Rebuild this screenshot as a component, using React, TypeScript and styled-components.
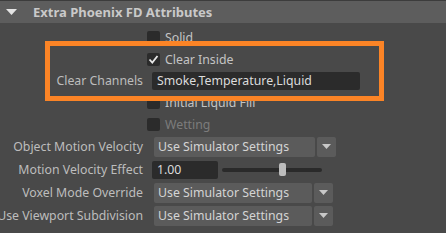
import React from "react";
import styled, { createGlobalStyle } from "styled-components";

const Global = createGlobalStyle`
  html, body { margin: 0; padding: 0; background: #494949; overflow: hidden; }
  body { font-family: "Noto Sans", "Open Sans", sans-serif; }
`;

const Page = styled.div`
  position: relative;
  width: 446px;
  height: 233px;
  background: #494949;
  overflow: hidden;
`;

const Header = styled.div`
  height: 22px;
  border-top: 1px solid #3c3c3c;
  background: #5d5d5d;
  display: flex;
  align-items: center;
  padding-left: 6px;
  gap: 16px;
`;

const HeaderTitle = styled.span`
  font-weight: bold;
  font-size: 13px;
  color: #c9c9c9;
`;

const Rows = styled.div`
  display: flex;
  flex-direction: column;
  padding-top: 4px;
`;

const Row = styled.div<{ $h: number }>`
  height: ${(p) => p.$h}px;
  display: flex;
  align-items: center;
`;

const Label = styled.div`
  width: 143px;
  flex: none;
  display: flex;
  justify-content: flex-end;
  white-space: nowrap;
  font-size: 12.3px;
  color: #bdbdbd;
`;

const Control = styled.div<{ $ml: number }>`
  margin-left: ${(p) => p.$ml}px;
  display: flex;
  align-items: center;
`;

const Box = styled.div`
  width: 13px;
  height: 13px;
  border-radius: 2px;
  background: #2b2b2b;
  display: flex;
  align-items: center;
  justify-content: center;
`;

const CheckText = styled.span<{ $dim?: boolean }>`
  margin-left: 5px;
  font-size: 12.3px;
  color: ${(p) => (p.$dim ? "#7c7c7c" : "#c4c4c4")};
`;

const Field = styled.div<{ $w: number }>`
  width: ${(p) => p.$w}px;
  height: 18px;
  background: #2b2b2b;
  border-radius: 2px;
  box-sizing: border-box;
  padding-left: 5px;
  display: flex;
  align-items: center;
  font-size: 12.3px;
  color: #dcdcdc;
  white-space: nowrap;
`;

const Drop = styled.div<{ $w: number }>`
  width: ${(p) => p.$w}px;
  height: 20px;
  background: #5b5b5b;
  border-radius: 2px;
  box-sizing: border-box;
  padding-left: 4px;
  display: flex;
  align-items: center;
  font-size: 12.3px;
  color: #d4d4d4;
  white-space: nowrap;
`;

const ArrowBtn = styled.div`
  margin-left: 2px;
  width: 19px;
  height: 20px;
  background: #5b5b5b;
  border-radius: 2px;
  display: flex;
  align-items: center;
  justify-content: center;
`;

const Track = styled.div`
  position: relative;
  margin-left: 4px;
  width: 100px;
  height: 4px;
  border-radius: 2px;
  background: #2a2a2a;
`;

const Handle = styled.div`
  position: absolute;
  left: 57px;
  top: -5px;
  width: 7px;
  height: 13px;
  border-radius: 2px;
  background: #bdbdbd;
`;

const Highlight = styled.div`
  position: absolute;
  left: 45px;
  top: 41px;
  width: 339px;
  height: 60px;
  box-sizing: border-box;
  border: 5px solid #fb8426;
  pointer-events: none;
`;

const Tri = () => (
  <svg width="11" height="6" viewBox="0 0 11 6">
    <polygon points="0,0 11,0 5.5,6" fill="#e4e4e4" />
  </svg>
);

const SmallTri = () => (
  <svg width="9" height="5" viewBox="0 0 9 5">
    <polygon points="0,0 9,0 4.5,5" fill="#c8c8c8" />
  </svg>
);

const Check = () => (
  <svg width="11" height="11" viewBox="0 0 11 11">
    <polyline points="1.5,5.5 4.3,8.5 9.5,2" fill="none" stroke="#e8e8e8" strokeWidth="1.8" />
  </svg>
);

const CheckRow = ({ h, text, checked, dim }: { h: number; text: string; checked?: boolean; dim?: boolean }) => (
  <Row $h={h}>
    <Label />
    <Control $ml={4}>
      <Box>{checked && <Check />}</Box>
      <CheckText $dim={dim}>{text}</CheckText>
    </Control>
  </Row>
);

const DropRow = ({ h, label, w }: { h: number; label: string; w: number }) => (
  <Row $h={h}>
    <Label>{label}</Label>
    <Control $ml={11}>
      <Drop $w={w}>Use Simulator Settings</Drop>
      <ArrowBtn>
        <SmallTri />
      </ArrowBtn>
    </Control>
  </Row>
);

export default function App() {
  return (
    <Page>
      <Global />
      <Header>
        <Tri />
        <HeaderTitle>Extra Phoenix FD Attributes</HeaderTitle>
      </Header>
      <Rows>
        <CheckRow h={21} text="Solid" />
        <CheckRow h={22} text="Clear Inside" checked />
        <Row $h={21}>
          <Label>Clear Channels</Label>
          <Control $ml={9}>
            <Field $w={208}>Smoke,Temperature,Liquid</Field>
          </Control>
        </Row>
        <CheckRow h={22} text="Initial Liquid Fill" />
        <CheckRow h={22} text="Wetting" dim />
        <DropRow h={23} label="Object Motion Velocity" w={161} />
        <Row $h={23}>
          <Label>Motion Velocity Effect</Label>
          <Control $ml={9}>
            <Field $w={66}>1.00</Field>
            <Track>
              <Handle />
            </Track>
          </Control>
        </Row>
        <DropRow h={23} label="Voxel Mode Override" w={158} />
        <DropRow h={23} label="Use Viewport Subdivision" w={158} />
      </Rows>
      <Highlight />
    </Page>
  );
}
